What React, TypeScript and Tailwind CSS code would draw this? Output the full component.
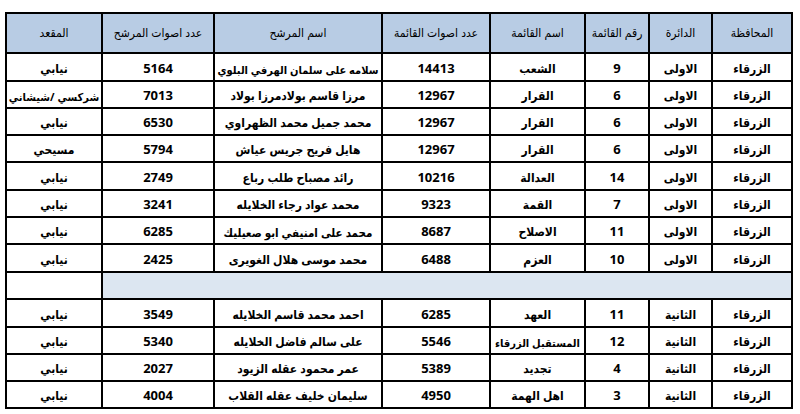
import React from "react";

type Row = {
  gov: string;
  dist: string;
  num: string;
  list: string;
  listVotes: string;
  cand: string;
  candVotes: string;
  seat: string;
  h: "a" | "b";
  candCls?: string;
  seatCls?: string;
  listCls?: string;
};

const rows1: Row[] = [
  { gov: "الزرقاء", dist: "الاولى", num: "9", list: "الشعب", listVotes: "14413", cand: "سلامه على سلمان الهرفي البلوي", candVotes: "5164", seat: "نيابي", h: "b", candCls: "text-[11px]" },
  { gov: "الزرقاء", dist: "الاولى", num: "6", list: "القرار", listVotes: "12967", cand: "مرزا قاسم بولادمرزا بولاد", candVotes: "7013", seat: "شركسي /شيشاني", h: "a", seatCls: "text-[11px]" },
  { gov: "الزرقاء", dist: "الاولى", num: "6", list: "القرار", listVotes: "12967", cand: "محمد جميل محمد الظهراوي", candVotes: "6530", seat: "نيابي", h: "a" },
  { gov: "الزرقاء", dist: "الاولى", num: "6", list: "القرار", listVotes: "12967", cand: "هايل فريح جريس عياش", candVotes: "5794", seat: "مسيحي", h: "a" },
  { gov: "الزرقاء", dist: "الاولى", num: "14", list: "العدالة", listVotes: "10216", cand: "رائد مصباح طلب رباع", candVotes: "2749", seat: "نيابي", h: "b" },
  { gov: "الزرقاء", dist: "الاولى", num: "7", list: "القمة", listVotes: "9323", cand: "محمد عواد رجاء الخلايله", candVotes: "3241", seat: "نيابي", h: "a" },
  { gov: "الزرقاء", dist: "الاولى", num: "11", list: "الاصلاح", listVotes: "8687", cand: "محمد على امنيفي ابو صعيليك", candVotes: "6285", seat: "نيابي", h: "a", candCls: "text-[11.5px]" },
  { gov: "الزرقاء", dist: "الاولى", num: "10", list: "العزم", listVotes: "6488", cand: "محمد موسى هلال الغويرى", candVotes: "2425", seat: "نيابي", h: "b" },
];

const rows2: Row[] = [
  { gov: "الزرقاء", dist: "الثانية", num: "11", list: "العهد", listVotes: "6285", cand: "احمد محمد قاسم الخلايله", candVotes: "3549", seat: "نيابي", h: "b" },
  { gov: "الزرقاء", dist: "الثانية", num: "12", list: "المستقبل الزرقاء", listVotes: "5546", cand: "على سالم فاضل الخلايله", candVotes: "5340", seat: "نيابي", h: "a", listCls: "text-[11px]" },
  { gov: "الزرقاء", dist: "الثانية", num: "4", list: "تجديد", listVotes: "5389", cand: "عمر محمود عقله الزيود", candVotes: "2027", seat: "نيابي", h: "a" },
  { gov: "الزرقاء", dist: "الثانية", num: "3", list: "اهل الهمة", listVotes: "4950", cand: "سليمان خليف عقله القلاب", candVotes: "4004", seat: "نيابي", h: "a" },
];

const headers = [
  "المحافظة",
  "الدائرة",
  "رقم القائمة",
  "اسم القائمة",
  "عدد اصوات القائمة",
  "اسم المرشح",
  "عدد اصوات المرشح",
  "المقعد",
];

const td =
  "border-2 border-black align-bottom text-center pb-[2px] px-0 whitespace-nowrap overflow-hidden";
const num = "text-[13px]";

function DataRow({ r }: { r: Row }) {
  return (
    <tr className={r.h === "b" ? "h-[28px]" : "h-[27px]"}>
      <td className={td}>{r.gov}</td>
      <td className={td}>{r.dist}</td>
      <td className={td + " " + num}>{r.num}</td>
      <td className={td + " " + (r.listCls ?? "")}>{r.list}</td>
      <td className={td + " " + num}>{r.listVotes}</td>
      <td className={td + " " + (r.candCls ?? "")}>{r.cand}</td>
      <td className={td + " " + num}>{r.candVotes}</td>
      <td className={td + " " + (r.seatCls ?? "")}>{r.seat}</td>
    </tr>
  );
}

export default function App() {
  return (
    <div className="w-[800px] h-[414px] bg-white overflow-hidden pt-[12px] pl-[5px]">
      <table
        dir="rtl"
        className="table-fixed border-collapse w-[786px] text-[12px] font-bold text-black font-['Open_Sans','DejaVu_Sans_Condensed','DejaVu_Sans',sans-serif]"
      >
        <colgroup>
          <col className="w-[80px]" />
          <col className="w-[63px]" />
          <col className="w-[64px]" />
          <col className="w-[95px]" />
          <col className="w-[108px]" />
          <col className="w-[168px]" />
          <col className="w-[112px]" />
          <col className="w-[96px]" />
        </colgroup>
        <thead>
          <tr className="h-[40px]">
            {headers.map((h) => (
              <th
                key={h}
                className="border-2 border-black bg-[#b8cce4] font-normal text-black align-middle text-center px-0 whitespace-nowrap"
              >
                {h}
              </th>
            ))}
          </tr>
        </thead>
        <tbody>
          {rows1.map((r, i) => (
            <DataRow key={"a" + i} r={r} />
          ))}
          <tr className="h-[27px]">
            <td colSpan={7} className="border-2 border-black bg-[#dce6f1]"></td>
            <td className="border-2 border-black bg-white"></td>
          </tr>
          {rows2.map((r, i) => (
            <DataRow key={"b" + i} r={r} />
          ))}
        </tbody>
      </table>
    </div>
  );
}
